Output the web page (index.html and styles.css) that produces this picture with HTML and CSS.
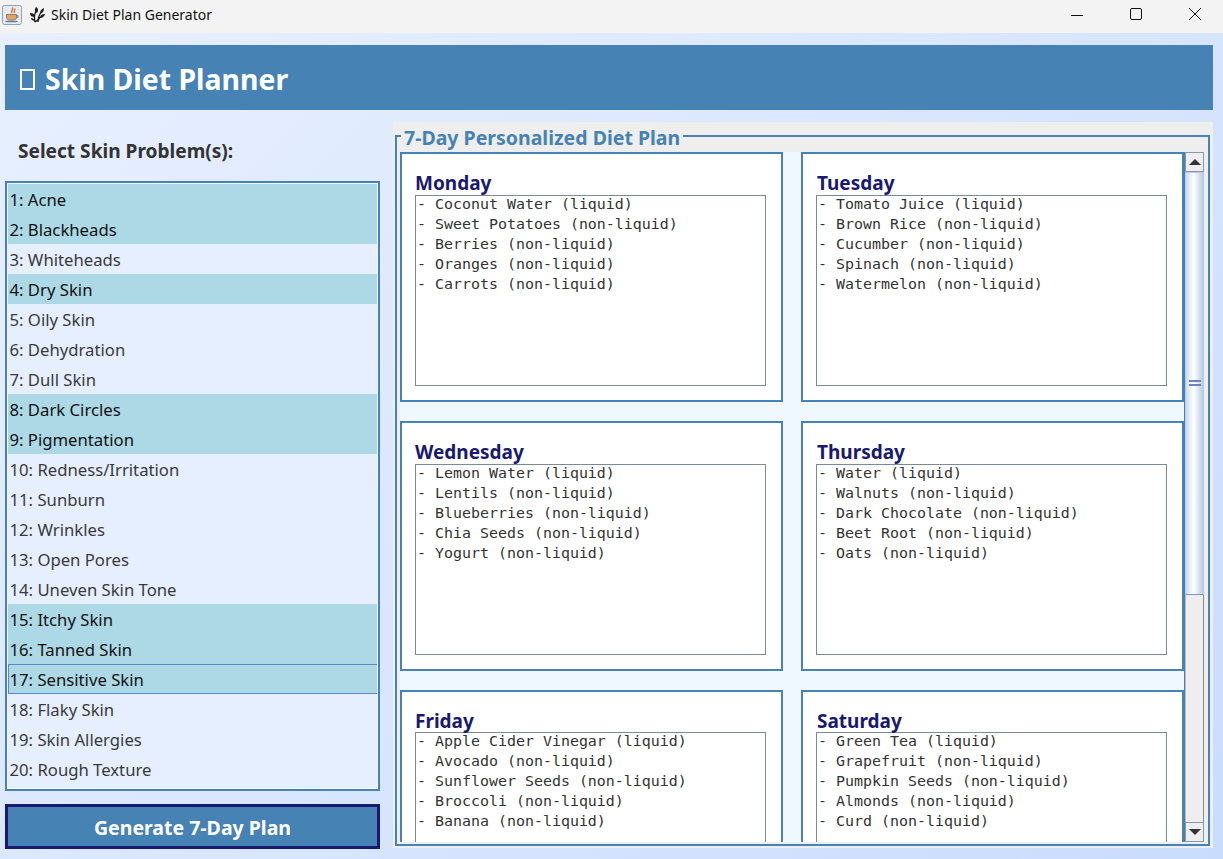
FILE: index.html
```html
<!DOCTYPE html>
<html lang="en">

<head>
    <meta charset="UTF-8" />
    <meta name="viewport" content="width=device-width, initial-scale=1.0" />
    <title>Skin Diet Plan Generator</title>
    <link rel="stylesheet" href="styles.css">
</head>

<body>
    <div class="titlebar">
        <span class="java-icon">
            <svg width="20" height="20" viewBox="0 0 20 20">
                <rect x="0.5" y="0.5" width="19" height="19" rx="2" fill="#e4ebf3" stroke="#8aa3bd" />
                <path d="M10 2.500c2.500 2-2 3 0 5.500M12.500 3.500c1 1.500-1 2 0 4.500" fill="none" stroke="#e0762a" stroke-width="1.500" />
                <path d="M4.500 9.500h10v3c0 1.500-1.500 2.500-3 2.500H7.500c-1.500 0-3-1-3-2.500z" fill="#e2a469" stroke="#7f6a55" stroke-width="0.800" />
                <path d="M14.500 10.500h1.500v2h-1.500" fill="none" stroke="#7f6a55" stroke-width="0.800" />
                <path d="M3.500 16.500h12" stroke="#5c7a99" stroke-width="1.400" />
            </svg>
        </span>
        <svg class="plant-icon" width="15" height="16" viewBox="0 0 15 16">
            <path d="M5 15C4 11 4 8 6 4M8 15c0-4 1-7 3-10M5 15c2-1 4-2 5-5" fill="none" stroke="#111" stroke-width="1.300" />
            <path d="M0 6c3 0 5 1 5 4-3 0-5-1-5-4zM1 11c2 0 3 1 4 3-2 0-4-1-4-3zM6 0c2 1 3 3 1 6-2-1-3-3-1-6zM14 1c0 3-1 5-4 6 0-3 1-5 4-6zM15 7c-1 3-3 4-5 4 0-3 2-4 5-4z" fill="#222" />
        </svg>
        <span class="titlebar-text">Skin Diet Plan Generator</span>
        <div class="win-controls">
            <svg class="win-btn" width="12" height="12" viewBox="0 0 12 12">
                <path d="M0 7.500h12" stroke="#111" stroke-width="1" />
            </svg>
            <svg class="win-btn" width="12" height="12" viewBox="0 0 12 12">
                <rect x="0.500" y="0.500" width="11" height="11" rx="1.500" fill="none" stroke="#111" />
            </svg>
            <svg class="win-btn" width="12" height="12" viewBox="0 0 12 12">
                <path d="M0 0l12 12M12 0L0 12" stroke="#111" stroke-width="1" />
            </svg>
        </div>
    </div>

    <div class="app">
        <header class="banner">
            <span class="tofu"></span>
            <h1>Skin Diet Planner</h1>
        </header>

        <div class="content">
            <aside class="left">
                <h2>Select Skin Problem(s):</h2>
                <ul class="problems">
                    <li class="sel">1: Acne</li>
                    <li class="sel">2: Blackheads</li>
                    <li>3: Whiteheads</li>
                    <li class="sel">4: Dry Skin</li>
                    <li>5: Oily Skin</li>
                    <li>6: Dehydration</li>
                    <li>7: Dull Skin</li>
                    <li class="sel">8: Dark Circles</li>
                    <li class="sel">9: Pigmentation</li>
                    <li>10: Redness/Irritation</li>
                    <li>11: Sunburn</li>
                    <li>12: Wrinkles</li>
                    <li>13: Open Pores</li>
                    <li>14: Uneven Skin Tone</li>
                    <li class="sel">15: Itchy Skin</li>
                    <li class="sel">16: Tanned Skin</li>
                    <li class="sel focus">17: Sensitive Skin</li>
                    <li>18: Flaky Skin</li>
                    <li>19: Skin Allergies</li>
                    <li>20: Rough Texture</li>
                </ul>
                <button class="generate">Generate 7-Day Plan</button>
            </aside>

            <section class="right">
                <fieldset class="plan">
                    <legend>7-Day Personalized Diet Plan</legend>
                    <div class="plan-inner">
                        <div class="viewport">
                            <div class="days">
                                <div class="day">
                                    <h3>Monday</h3>
                                    <pre class="meals"><span>- Coconut Water (liquid)
- Sweet Potatoes (non-liquid)
- Berries (non-liquid)
- Oranges (non-liquid)
- Carrots (non-liquid)</span></pre>
                                </div>
                                <div class="day">
                                    <h3>Tuesday</h3>
                                    <pre class="meals"><span>- Tomato Juice (liquid)
- Brown Rice (non-liquid)
- Cucumber (non-liquid)
- Spinach (non-liquid)
- Watermelon (non-liquid)</span></pre>
                                </div>
                                <div class="day">
                                    <h3>Wednesday</h3>
                                    <pre class="meals"><span>- Lemon Water (liquid)
- Lentils (non-liquid)
- Blueberries (non-liquid)
- Chia Seeds (non-liquid)
- Yogurt (non-liquid)</span></pre>
                                </div>
                                <div class="day">
                                    <h3>Thursday</h3>
                                    <pre class="meals"><span>- Water (liquid)
- Walnuts (non-liquid)
- Dark Chocolate (non-liquid)
- Beet Root (non-liquid)
- Oats (non-liquid)</span></pre>
                                </div>
                                <div class="day last-row">
                                    <h3>Friday</h3>
                                    <pre class="meals"><span>- Apple Cider Vinegar (liquid)
- Avocado (non-liquid)
- Sunflower Seeds (non-liquid)
- Broccoli (non-liquid)
- Banana (non-liquid)</span></pre>
                                </div>
                                <div class="day last-row">
                                    <h3>Saturday</h3>
                                    <pre class="meals"><span>- Green Tea (liquid)
- Grapefruit (non-liquid)
- Pumpkin Seeds (non-liquid)
- Almonds (non-liquid)
- Curd (non-liquid)</span></pre>
                                </div>
                            </div>
                        </div>
                        <div class="scrollbar">
                            <div class="sb-btn"><span class="arrow-up"></span></div>
                            <div class="sb-thumb"><span class="grip"></span></div>
                            <div class="sb-track"></div>
                            <div class="sb-btn"><span class="arrow-down"></span></div>
                        </div>
                    </div>
                </fieldset>
            </section>
        </div>
    </div>
</body>

</html>
```

FILE: styles.css
```css
* {
    box-sizing: border-box;
}

html,
body {
    height: 100%;
}

body {
    margin: 0;
    height: 859px;
    overflow: hidden;
    font-family: 'Noto Sans', sans-serif;
    background: #f3f3f3;
    color: #333;
}

.titlebar {
    height: 33px;
    display: flex;
    align-items: center;
    padding: 0 0 4px 2px;
    background: #f3f3f3;
}

.java-icon {
    display: flex;
    width: 20px;
    height: 20px;
}

.plant-icon {
    margin-left: 8px;
}

.titlebar-text {
    margin-left: 6px;
    font-size: 14px;
    color: #111;
}

.win-controls {
    margin-left: auto;
    display: flex;
    gap: 47px;
    padding-right: 22px;
}

.win-btn {
    display: block;
    margin-bottom: 2px;
}

.app {
    height: 826px;
    padding: 12px 10px 0 5px;
    background: linear-gradient(135deg, #e8f0ff, #cadcfd);
}

.banner {
    height: 65px;
    display: flex;
    align-items: center;
    gap: 10px;
    padding-left: 15px;
    background: #4682b4;
    color: #fff;
}

.banner h1 {
    margin: 3px 0 0;
    font-size: 28.400px;
    font-weight: 700;
}

.tofu {
    width: 15px;
    height: 21px;
    margin-top: 3px;
    border: 2px solid #fff;
}

.content {
    display: flex;
    gap: 13px;
    margin-top: 12px;
}

.left {
    width: 375px;
}

.left h2 {
    margin: 0;
    height: 59px;
    padding: 16px 0 0 13px;
    font-size: 19.100px;
    line-height: 26px;
    font-weight: 700;
    color: #333;
}

.problems {
    list-style: none;
    margin: 0;
    height: 610px;
    padding: 1px 1px 0 1px;
    border: 2px solid #4682b4;
    background: #e6efff;
    box-shadow: inset 0 0 0 1px #f2f7ff;
    font-size: 16.700px;
}

.problems li {
    height: 30px;
    line-height: 30px;
    padding: 1px 0 0 1.500px;
    color: #3a3a3a;
}

.problems .sel {
    background: #add8e6;
    color: #111;
}

.problems .focus {
    border: 1px solid #5f86c6;
    border-right: 0;
    padding: 0 0 0 0.500px;
}

.generate {
    display: block;
    width: 100%;
    height: 45px;
    margin-top: 13px;
    padding-top: 3px;
    border: 3px solid #191970;
    background: #4682b4;
    color: #fff;
    font-family: inherit;
    font-size: 19.500px;
    font-weight: 700;
}

.right {
    flex: 1;
    height: 726px;
    padding: 0 3px 0 2px;
    background: #eeeeee;
}

.plan {
    margin: 0;
    height: 724px;
    padding: 0 4px 0 3px;
    border: 2px solid #4682b4;
    min-width: 0;
}

.plan legend {
    margin-left: 1px;
    padding: 0 3px;
    height: 28px;
    font-size: 19.500px;
    line-height: 32px;
    font-weight: 700;
    color: #4682b4;
}

.plan-inner {
    display: flex;
    height: 690px;
    margin-top: 2px;
}

.viewport {
    width: 784px;
    overflow: hidden;
    background: #f0f8ff;
}

.days {
    display: grid;
    grid-template-columns: 383px 383px;
    grid-auto-rows: 250px;
    gap: 19px 18px;
}

.day {
    padding: 19px 15px 0 13px;
    border: 2px solid #4682b4;
    background: #fff;
}

.day h3 {
    margin: 0;
    height: 22px;
    font-size: 19px;
    line-height: 20px;
    font-weight: 700;
    color: #191970;
}

.day:nth-child(even) h3 {
    padding-left: 1px;
}

.last-row .meals {
    margin-top: -1px;
}

.meals {
    margin: 0;
    height: 191px;
    padding: 0 1px;
    border: 1px solid #7a8a99;
    font-family: 'DejaVu Sans Mono', monospace;
    font-size: 14.950px;
    line-height: 20px;
    color: #333;
}

.meals span {
    display: block;
    margin-top: -2px;
}

.scrollbar {
    width: 20px;
    display: flex;
    flex-direction: column;
    background: #eeeeee;
    border-left: 1px solid #4682b4;
}

.sb-btn {
    height: 20px;
    display: flex;
    align-items: center;
    justify-content: center;
    background: #eeeeee;
    border: 1px solid #8a99a8;
}

.arrow-up {
    border: 6px solid transparent;
    border-top: 0;
    border-bottom: 6px solid #333;
}

.arrow-down {
    border: 6px solid transparent;
    border-bottom: 0;
    border-top: 6px solid #333;
}

.sb-thumb {
    height: 423px;
    display: flex;
    align-items: center;
    justify-content: center;
    padding-bottom: 1px;
    background: linear-gradient(90deg, #cfdcf0, #ffffff 45%, #b9cbe2);
    border: 1px solid #b6c8e6;
    border-bottom-color: #7a9ad0;
}

.grip {
    width: 12px;
    height: 6px;
    border-top: 2px solid #6d84c4;
    border-bottom: 2px solid #6d84c4;
}

.sb-track {
    flex: 1;
    border-left: 1px solid #b9b9b9;
    border-right: 1px solid #8a8a8a;
}
```
